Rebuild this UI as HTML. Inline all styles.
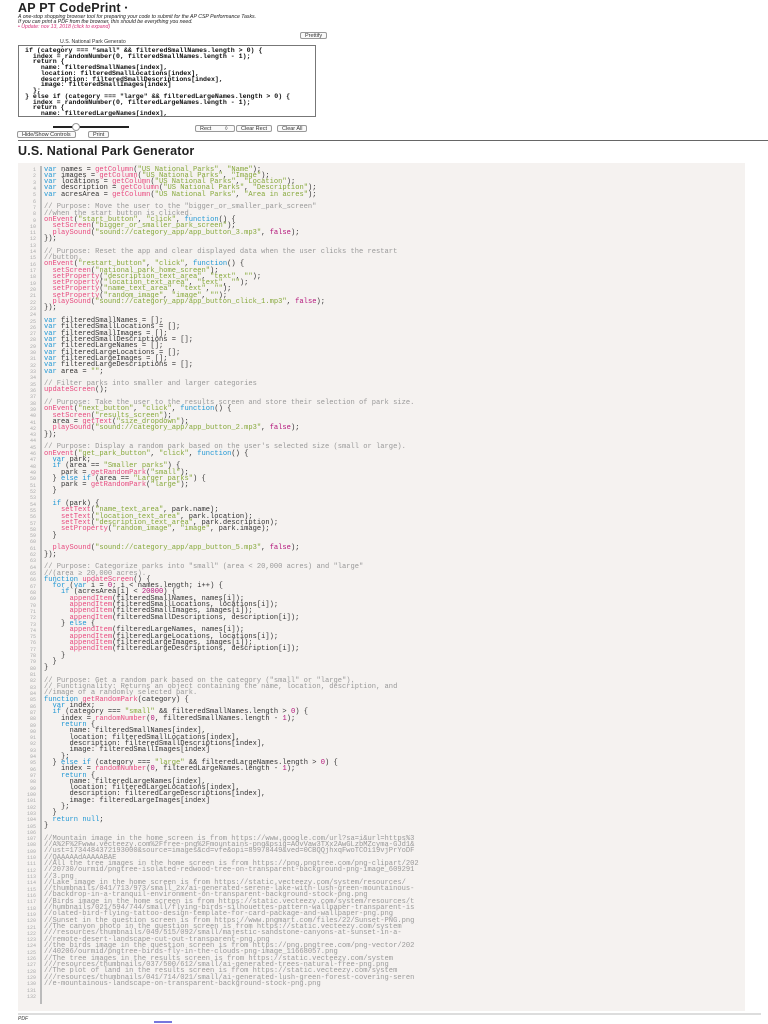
<!DOCTYPE html>
<html><head><meta charset="utf-8">
<style>
*{margin:0;padding:0;box-sizing:border-box}
body{width:768px;height:1024px;background:#fff;font-family:"Liberation Sans",sans-serif;color:#222;position:relative;overflow:hidden}
.abs{position:absolute}
h1{position:absolute;left:18px;top:2px;font-size:12.5px;line-height:13px;font-weight:bold;letter-spacing:0.2px}
h1 small{font-size:5px;vertical-align:middle}
.sub{position:absolute;left:18px;top:14.5px;font-size:5.2px;font-style:italic;line-height:5px;color:#222}
.pink{color:#d6337a}
.btn{position:absolute;font-size:5.5px;border:1px solid #999;border-radius:2px;background:#fafafa;padding:0 4px;line-height:6px;height:7px;color:#333}
.ta{position:absolute;left:18px;top:45px;width:298px;height:72px;border:1px solid #777;overflow:hidden;padding-left:6px}
.ta div{font-family:"Liberation Mono",monospace;font-size:6.6px;line-height:5.75px;font-weight:bold;white-space:pre;color:#111;margin-top:-4px}
h2{position:absolute;left:18px;top:144px;font-size:12.5px;font-weight:bold;letter-spacing:0.2px}
.code{position:absolute;left:18px;top:163px;width:727px;height:848px;background:#f5f2f0}
.gut{position:absolute;left:40px;top:166px;width:2px;height:838px;background:#bbb}
.nums{position:absolute;left:18px;top:167px;width:18px;text-align:right;font-family:"Liberation Mono",monospace;font-size:5px;line-height:6.31px;color:#aaa;white-space:pre}
pre{position:absolute;left:44px;top:166.5px;font-family:"Liberation Mono",monospace;font-size:7.1px;line-height:6.31px;color:#333;white-space:pre}
.k{color:#1f97d4}.f{color:#e84a7f}.s{color:#86a83a}.c{color:#999}.n{color:#b3157a}
</style></head><body>
<h1>AP PT CodePrint <small>●</small></h1>
<div class="sub">A one-stop shopping browser tool for preparing your code to submit for the AP CSP Performance Tasks.<br>If you can print a PDF from the browser, this should be everything you need.<br><span class="pink">• Update: nov 13, 2018 (click to expand)</span></div>
<div class="btn" style="left:300px;top:32px">Prettify</div>
<div class="abs" style="left:60px;top:39px;font-size:5.2px;color:#333">U.S. National Park Generato</div>
<div class="ta"><div>var index;
if (category === "small" && filteredSmallNames.length > 0) {
  index = randomNumber(0, filteredSmallNames.length - 1);
  return {
    name: filteredSmallNames[index],
    location: filteredSmallLocations[index],
    description: filteredSmallDescriptions[index],
    image: filteredSmallImages[index]
  };
} else if (category === "large" && filteredLargeNames.length > 0) {
  index = randomNumber(0, filteredLargeNames.length - 1);
  return {
    name: filteredLargeNames[index],
    location: filteredLargeLocations[index],
    description: filteredLargeDescriptions[index],
    image: filteredLargeImages[index]</div></div>
<div class="abs" style="left:53px;top:126px;width:76px;height:1.5px;background:#222"></div>
<div class="abs" style="left:72px;top:123px;width:8px;height:8px;border-radius:50%;background:#fff;border:1px solid #999"></div>
<div class="btn" style="left:195px;top:125px;width:40px">Rect <span style="margin-left:12px">◊</span></div>
<div class="btn" style="left:236px;top:125px">Clear Rect</div>
<div class="btn" style="left:277px;top:125px">Clear All</div>
<div class="btn" style="left:17px;top:131px">Hide/Show Controls</div>
<div class="btn" style="left:88px;top:131px">Print</div>
<div class="abs" style="left:18px;top:140px;width:750px;height:1px;background:#666"></div>
<h2>U.S. National Park Generator</h2>
<div class="code"></div>
<div class="gut"></div>
<div class="nums">1
2
3
4
5
6
7
8
9
10
11
12
13
14
15
16
17
18
19
20
21
22
23
24
25
26
27
28
29
30
31
32
33
34
35
36
37
38
39
40
41
42
43
44
45
46
47
48
49
50
51
52
53
54
55
56
57
58
59
60
61
62
63
64
65
66
67
68
69
70
71
72
73
74
75
76
77
78
79
80
81
82
83
84
85
86
87
88
89
90
91
92
93
94
95
96
97
98
99
100
101
102
103
104
105
106
107
108
109
110
111
112
113
114
115
116
117
118
119
120
121
122
123
124
125
126
127
128
129
130
131
132</div>
<pre><span class="k">var</span> names = <span class="f">getColumn</span>(<span class="s">"US National Parks"</span>, <span class="s">"Name"</span>);
<span class="k">var</span> images = <span class="f">getColumn</span>(<span class="s">"US National Parks"</span>, <span class="s">"Image"</span>);
<span class="k">var</span> locations = <span class="f">getColumn</span>(<span class="s">"US National Parks"</span>, <span class="s">"Location"</span>);
<span class="k">var</span> description = <span class="f">getColumn</span>(<span class="s">"US National Parks"</span>, <span class="s">"Description"</span>);
<span class="k">var</span> acresArea = <span class="f">getColumn</span>(<span class="s">"US National Parks"</span>, <span class="s">"Area in acres"</span>);

<span class="c">// Purpose: Move the user to the "bigger_or_smaller_park_screen"</span>
<span class="c">//when the start button is clicked.</span>
<span class="f">onEvent</span>(<span class="s">"start_button"</span>, <span class="s">"click"</span>, <span class="k">function</span>() {
  <span class="f">setScreen</span>(<span class="s">"bigger_or_smaller_park_screen"</span>);
  <span class="f">playSound</span>(<span class="s">"sound://category_app/app_button_3.mp3"</span>, <span class="n">false</span>);
});

<span class="c">// Purpose: Reset the app and clear displayed data when the user clicks the restart</span>
<span class="c">//button.</span>
<span class="f">onEvent</span>(<span class="s">"restart_button"</span>, <span class="s">"click"</span>, <span class="k">function</span>() {
  <span class="f">setScreen</span>(<span class="s">"national_park_home_screen"</span>);
  <span class="f">setProperty</span>(<span class="s">"description_text_area"</span>, <span class="s">"text"</span>, <span class="s">""</span>);
  <span class="f">setProperty</span>(<span class="s">"location_text_area"</span>, <span class="s">"text"</span>, <span class="s">""</span>);
  <span class="f">setProperty</span>(<span class="s">"name_text_area"</span>, <span class="s">"text"</span>, <span class="s">""</span>);
  <span class="f">setProperty</span>(<span class="s">"random_image"</span>, <span class="s">"image"</span>, <span class="s">""</span>);
  <span class="f">playSound</span>(<span class="s">"sound://category_app/app_button_click_1.mp3"</span>, <span class="n">false</span>);
});

<span class="k">var</span> filteredSmallNames = [];
<span class="k">var</span> filteredSmallLocations = [];
<span class="k">var</span> filteredSmallImages = [];
<span class="k">var</span> filteredSmallDescriptions = [];
<span class="k">var</span> filteredLargeNames = [];
<span class="k">var</span> filteredLargeLocations = [];
<span class="k">var</span> filteredLargeImages = [];
<span class="k">var</span> filteredLargeDescriptions = [];
<span class="k">var</span> area = <span class="s">""</span>;

<span class="c">// Filter parks into smaller and larger categories</span>
<span class="f">updateScreen</span>();

<span class="c">// Purpose: Take the user to the results screen and store their selection of park size.</span>
<span class="f">onEvent</span>(<span class="s">"next_button"</span>, <span class="s">"click"</span>, <span class="k">function</span>() {
  <span class="f">setScreen</span>(<span class="s">"results_screen"</span>);
  area = <span class="f">getText</span>(<span class="s">"size_dropdown"</span>);
  <span class="f">playSound</span>(<span class="s">"sound://category_app/app_button_2.mp3"</span>, <span class="n">false</span>);
});

<span class="c">// Purpose: Display a random park based on the user's selected size (small or large).</span>
<span class="f">onEvent</span>(<span class="s">"get_park_button"</span>, <span class="s">"click"</span>, <span class="k">function</span>() {
  <span class="k">var</span> park;
  <span class="k">if</span> (area == <span class="s">"Smaller parks"</span>) {
    park = <span class="f">getRandomPark</span>(<span class="s">"small"</span>);
  } <span class="k">else if</span> (area == <span class="s">"Larger parks"</span>) {
    park = <span class="f">getRandomPark</span>(<span class="s">"large"</span>);
  }

  <span class="k">if</span> (park) {
    <span class="f">setText</span>(<span class="s">"name_text_area"</span>, park.name);
    <span class="f">setText</span>(<span class="s">"location_text_area"</span>, park.location);
    <span class="f">setText</span>(<span class="s">"description_text_area"</span>, park.description);
    <span class="f">setProperty</span>(<span class="s">"random_image"</span>, <span class="s">"image"</span>, park.image);
  }

  <span class="f">playSound</span>(<span class="s">"sound://category_app/app_button_5.mp3"</span>, <span class="n">false</span>);
});

<span class="c">// Purpose: Categorize parks into "small" (area &lt; 20,000 acres) and "large"</span>
<span class="c">//(area ≥ 20,000 acres).</span>
<span class="k">function</span> <span class="f">updateScreen</span>() {
  <span class="k">for</span> (<span class="k">var</span> i = <span class="n">0</span>; i &lt; names.length; i++) {
    <span class="k">if</span> (acresArea[i] &lt; <span class="n">20000</span>) {
      <span class="f">appendItem</span>(filteredSmallNames, names[i]);
      <span class="f">appendItem</span>(filteredSmallLocations, locations[i]);
      <span class="f">appendItem</span>(filteredSmallImages, images[i]);
      <span class="f">appendItem</span>(filteredSmallDescriptions, description[i]);
    } <span class="k">else</span> {
      <span class="f">appendItem</span>(filteredLargeNames, names[i]);
      <span class="f">appendItem</span>(filteredLargeLocations, locations[i]);
      <span class="f">appendItem</span>(filteredLargeImages, images[i]);
      <span class="f">appendItem</span>(filteredLargeDescriptions, description[i]);
    }
  }
}

<span class="c">// Purpose: Get a random park based on the category ("small" or "large").</span>
<span class="c">// Functionality: Returns an object containing the name, location, description, and</span>
<span class="c">//image of a randomly selected park.</span>
<span class="k">function</span> <span class="f">getRandomPark</span>(category) {
  <span class="k">var</span> index;
  <span class="k">if</span> (category === <span class="s">"small"</span> &amp;&amp; filteredSmallNames.length &gt; <span class="n">0</span>) {
    index = <span class="f">randomNumber</span>(<span class="n">0</span>, filteredSmallNames.length - <span class="n">1</span>);
    <span class="k">return</span> {
      name: filteredSmallNames[index],
      location: filteredSmallLocations[index],
      description: filteredSmallDescriptions[index],
      image: filteredSmallImages[index]
    };
  } <span class="k">else if</span> (category === <span class="s">"large"</span> &amp;&amp; filteredLargeNames.length &gt; <span class="n">0</span>) {
    index = <span class="f">randomNumber</span>(<span class="n">0</span>, filteredLargeNames.length - <span class="n">1</span>);
    <span class="k">return</span> {
      name: filteredLargeNames[index],
      location: filteredLargeLocations[index],
      description: filteredLargeDescriptions[index],
      image: filteredLargeImages[index]
    };
  }
  <span class="k">return</span> <span class="k">null</span>;
}

<span class="c">//Mountain image in the home screen is from https://www.google.com/url?sa=i&amp;url=https%3</span>
<span class="c">//A%2F%2Fwww.vecteezy.com%2Ffree-png%2Fmountains-png&amp;psig=AOvVaw3TXx2AwGLzbMZcyma-GJd1&amp;</span>
<span class="c">//ust=1734484372193000&amp;source=images&amp;cd=vfe&amp;opi=89978449&amp;ved=0CBQQjhxqFwoTCOi19vjPrYoDF</span>
<span class="c">//QAAAAAdAAAAABAE</span>
<span class="c">//All the tree images in the home screen is from https://png.pngtree.com/png-clipart/202</span>
<span class="c">//20730/ourmid/pngtree-isolated-redwood-tree-on-transparent-background-png-image_609291</span>
<span class="c">//3.png</span>
<span class="c">//Lake image in the home screen is from https://static.vecteezy.com/system/resources/</span>
<span class="c">//thumbnails/041/713/973/small_2x/ai-generated-serene-lake-with-lush-green-mountainous-</span>
<span class="c">//backdrop-in-a-tranquil-environment-on-transparent-background-stock-png.png</span>
<span class="c">//Birds image in the home screen is from https://static.vecteezy.com/system/resources/t</span>
<span class="c">//humbnails/021/594/744/small/flying-birds-silhouettes-pattern-wallpaper-transparent-is</span>
<span class="c">//olated-bird-flying-tattoo-design-template-for-card-package-and-wallpaper-png.png</span>
<span class="c">//Sunset in the question screen is from https://www.pngmart.com/files/22/Sunset-PNG.png</span>
<span class="c">//The canyon photo in the question screen is from https://static.vecteezy.com/system</span>
<span class="c">///resources/thumbnails/049/515/092/small/majestic-sandstone-canyons-at-sunset-in-a-</span>
<span class="c">//remote-desert-landscape-cut-out-transparent-png.png</span>
<span class="c">//the birds image in the question screen is from https://png.pngtree.com/png-vector/202</span>
<span class="c">//40206/ourmid/pngtree-birds-fly-in-the-clouds-png-image_11668057.png</span>
<span class="c">//The tree images in the results screen is from https://static.vecteezy.com/system</span>
<span class="c">///resources/thumbnails/037/500/612/small/ai-generated-trees-natural-free-png.png</span>
<span class="c">//The plot of land in the results screen is from https://static.vecteezy.com/system</span>
<span class="c">///resources/thumbnails/041/714/021/small/ai-generated-lush-green-forest-covering-seren</span>
<span class="c">//e-mountainous-landscape-on-transparent-background-stock-png.png</span>

</pre>
<div class="abs" style="left:18px;top:1013px;width:743px;height:1.5px;background:#ddd"></div>
<div class="abs" style="left:18px;top:1016px;font-size:5px;font-style:italic;color:#333">PDF</div>
<div class="abs" style="left:154px;top:1021px;width:18px;height:1.5px;background:#7777dd"></div>
</body></html>
